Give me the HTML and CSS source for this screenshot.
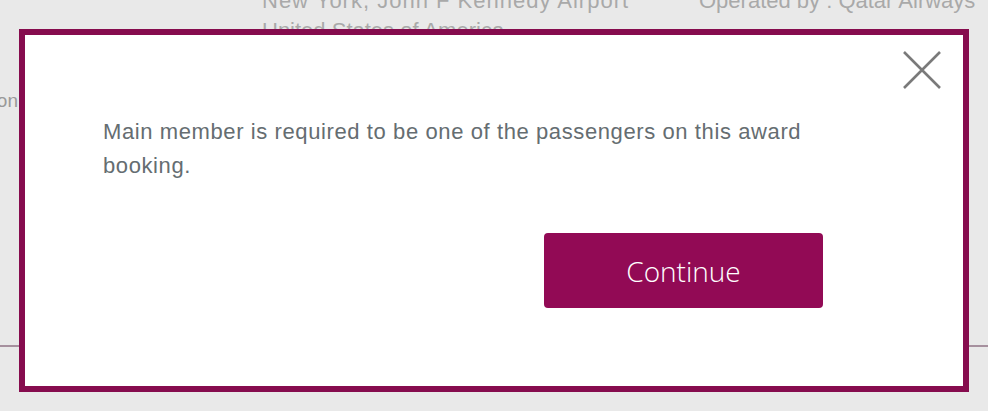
FILE: index.html
```html
<!DOCTYPE html>
<html lang="en">
<head>
<meta charset="utf-8">
<title>Award booking</title>
<link rel="stylesheet" href="styles.css">
</head>
<body>
<div class="page">
  <div class="flight-row">
    <div class="col col-left"><span>Connection</span></div>
    <div class="col col-airport">
      <div class="line line-airport">New York, John F Kennedy Airport</div>
      <div class="line">United States of America</div>
    </div>
    <div class="col col-operator">
      <div class="line">Operated by : Qatar Airways</div>
    </div>
  </div>
  <div class="divider"></div>
</div>

<div class="modal" role="dialog">
  <button class="close" aria-label="Close">
    <svg width="40" height="40" viewBox="0 0 40 40"><path d="M2 2 L38 38 M38 2 L2 38" stroke="#7a7a7a" stroke-width="2.6" fill="none"/></svg>
  </button>
  <div class="modal-body">
    <p class="message">Main member is required to be one of the passengers on this award booking.</p>
    <div class="actions">
      <button class="btn-continue">Continue</button>
    </div>
  </div>
</div>
</body>
</html>
```
FILE: styles.css
```css
html, body {
  margin: 0;
  padding: 0;
}
body {
  background: #e9e9e9;
  font-family: "Liberation Sans", Arial, sans-serif;
  width: 988px;
  height: 411px;
  overflow: hidden;
}
.page {
  display: flex;
  flex-direction: column;
}
.flight-row {
  display: flex;
  margin-top: -14px;
  height: 359px;
  color: #a9a9a9;
  font-size: 22px;
}
.col .line {
  line-height: 30px;
  white-space: nowrap;
}
.line-airport {
  letter-spacing: 1px;
}
.col-left {
  width: 18px;
  display: flex;
  justify-content: flex-end;
  overflow: hidden;
  white-space: nowrap;
  font-size: 19px;
  color: #999;
  padding-top: 104px;
  height: 30px;
}
.col-airport {
  margin-left: 244px;
  width: 437px;
}
.col-operator {
  width: 289px;
}
.divider {
  height: 2px;
  background: #a6909e;
}
.modal {
  position: fixed;
  top: 29px;
  left: 19px;
  width: 950px;
  height: 363px;
  box-sizing: border-box;
  border: 6px solid #860c4e;
  background: #fff;
}
.close {
  position: absolute;
  top: 15px;
  right: 21px;
  width: 40px;
  height: 40px;
  padding: 0;
  border: 0;
  background: none;
  display: flex;
}
.modal-body {
  padding: 80px 0 0 78px;
  width: 720px;
}
.message {
  margin: 0;
  font-size: 22px;
  letter-spacing: 0.6px;
  line-height: 34px;
  color: #656d71;
}
.actions {
  display: flex;
  justify-content: flex-end;
  margin-top: 50px;
}
.btn-continue {
  width: 279px;
  height: 75px;
  border: 0;
  border-radius: 4px;
  background: #920a55;
  color: #fff;
  font-family: "Open Sans", sans-serif;
  font-weight: 300;
  font-size: 28px;
  padding: 0;
}
```
